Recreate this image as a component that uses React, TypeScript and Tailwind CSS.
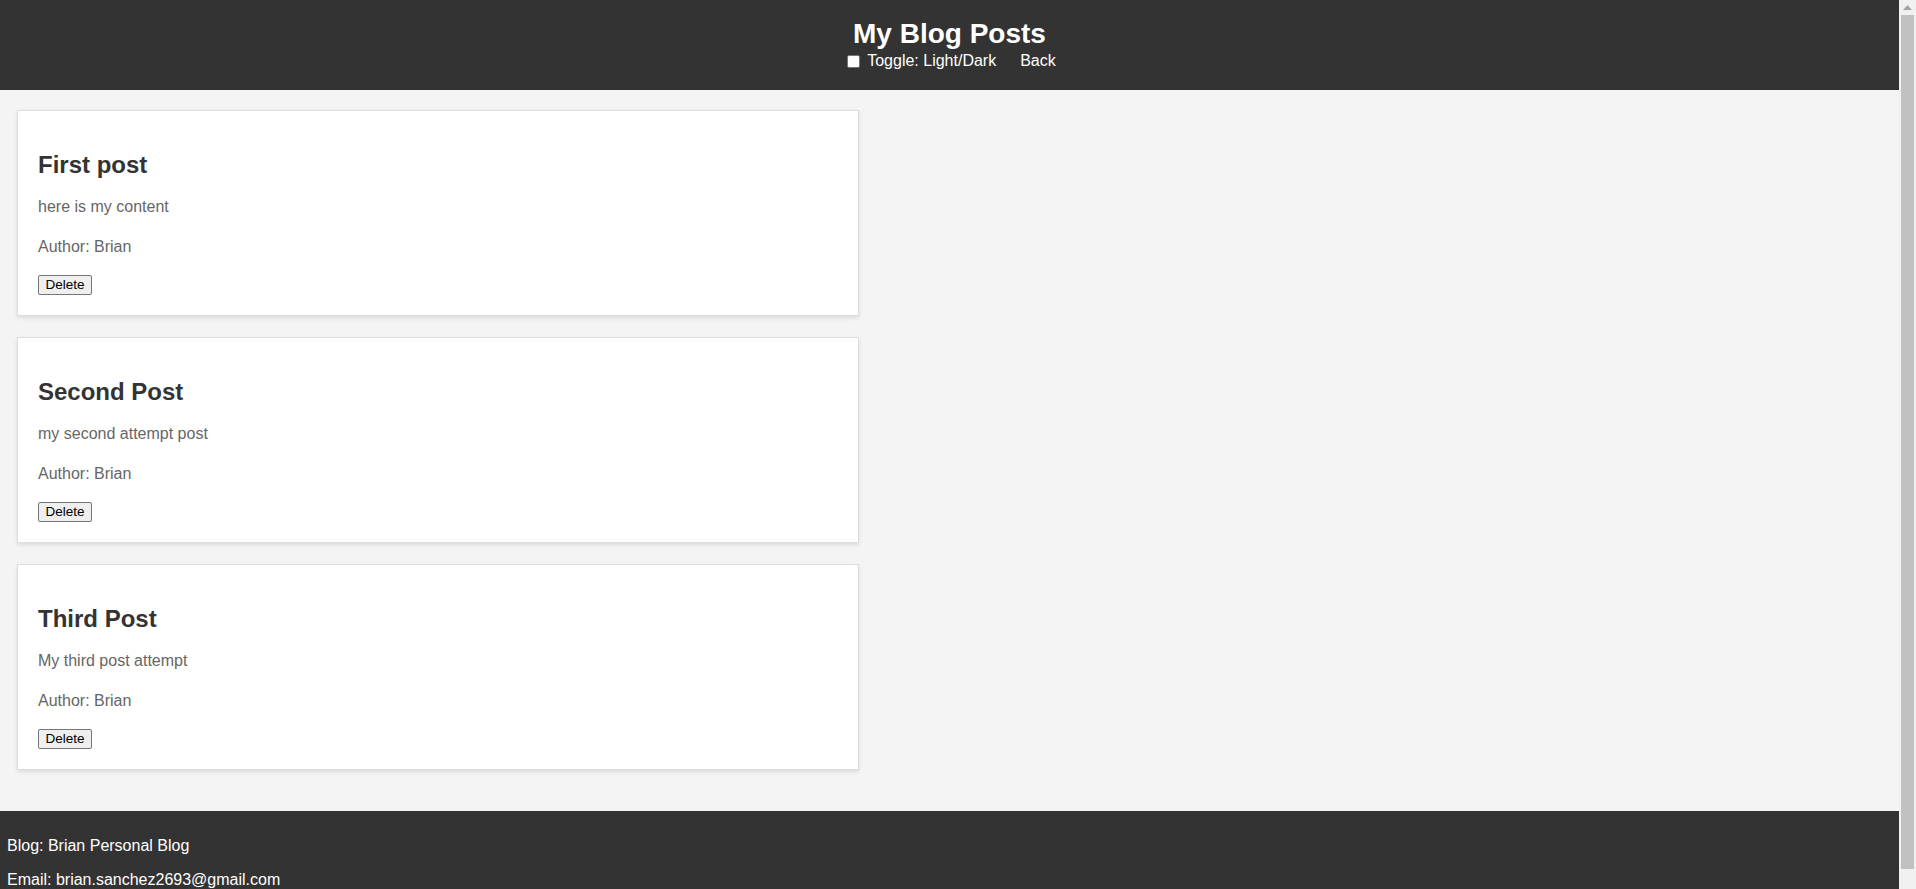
import { useState } from 'react'

type Post = {
  id: number
  title: string
  content: string
  author: string
}

const initialPosts: Post[] = [
  { id: 1, title: 'First post', content: 'here is my content', author: 'Brian' },
  { id: 2, title: 'Second Post', content: 'my second attempt post', author: 'Brian' },
  { id: 3, title: 'Third Post', content: 'My third post attempt', author: 'Brian' },
]

const PostCard = ({ post, onDelete }: { post: Post; onDelete: (id: number) => void }) => {
  return (
    <div className="w-[842px] mb-[21px] bg-white border border-[#dddddd] shadow-[0_2px_4px_rgba(0,0,0,0.1)] p-[20px]">
      <h2 className="mt-[20px] mb-[16px] text-[24px] leading-[28px] font-bold text-[#333333]">{post.title}</h2>
      <p className="mb-4 text-[16px] leading-6 text-[#666666]">{post.content}</p>
      <p className="mb-4 text-[16px] leading-6 text-[#666666]">Author: {post.author}</p>
      <button
        onClick={() => onDelete(post.id)}
        className="block h-[20px] w-[54px] bg-[#efefef] border border-[#767676] rounded-[2px] text-[13.5px] leading-[16px] text-black"
      >
        Delete
      </button>
    </div>
  )
}

// fake classic scrollbar, the page in the screenshot overflows a little
const ScrollBar = () => (
  <div className="w-[17px] shrink-0 bg-[#f1f1f1] flex flex-col items-center">
    <div className="h-[15px] flex items-center justify-center">
      <svg width="9" height="5" viewBox="0 0 9 5">
        <path d="M4.5 0 L9 5 L0 5 Z" fill="#a3a3a3" />
      </svg>
    </div>
    <div className="flex-1 w-[13px] bg-[#c1c1c1]" />
    <div className="h-[20px]" />
  </div>
)

export default function App() {
  const [posts, setPosts] = useState<Post[]>(initialPosts)
  const [dark, setDark] = useState(false)

  const handleDelete = (id: number) => {
    setPosts(posts.filter((p) => p.id !== id))
  }

  return (
    <div className="flex h-screen overflow-hidden bg-[#f4f4f4] font-['Liberation_Sans',Arial,sans-serif]">
      <div className="flex-1 min-w-0 overflow-hidden">
        <header className="h-[90px] bg-[#333333] text-white flex flex-col items-center pt-[18px]">
          <h1 className="text-[28px] leading-[31px] font-bold">My Blog Posts</h1>
          <div className="mt-[3px] flex items-center text-[16px] leading-[18px]">
            <label className="flex items-center">
              <input
                type="checkbox"
                checked={dark}
                onChange={() => setDark(!dark)}
                className="appearance-none ml-[4px] mr-[3px] w-[13px] h-[13px] bg-white border border-[#767676] rounded-[2px]"
              />
              <span className="ml-[4px]">Toggle: Light/Dark</span>
            </label>
            <a href="#" className="ml-[24px] text-white">Back</a>
          </div>
        </header>

        <main className="pl-[17px] pt-[20px] pb-[20px]">
          {posts.map((post) => (
            <PostCard key={post.id} post={post} onDelete={handleDelete} />
          ))}
        </main>

        <footer className="bg-[#333333] text-white px-[7px] pt-[26px] pb-[26px] text-[16px] leading-[18px]">
          <p>Blog: Brian Personal Blog</p>
          <p className="mt-[16px]">Email: brian.sanchez2693@gmail.com</p>
        </footer>
      </div>
      <ScrollBar />
    </div>
  )
}
